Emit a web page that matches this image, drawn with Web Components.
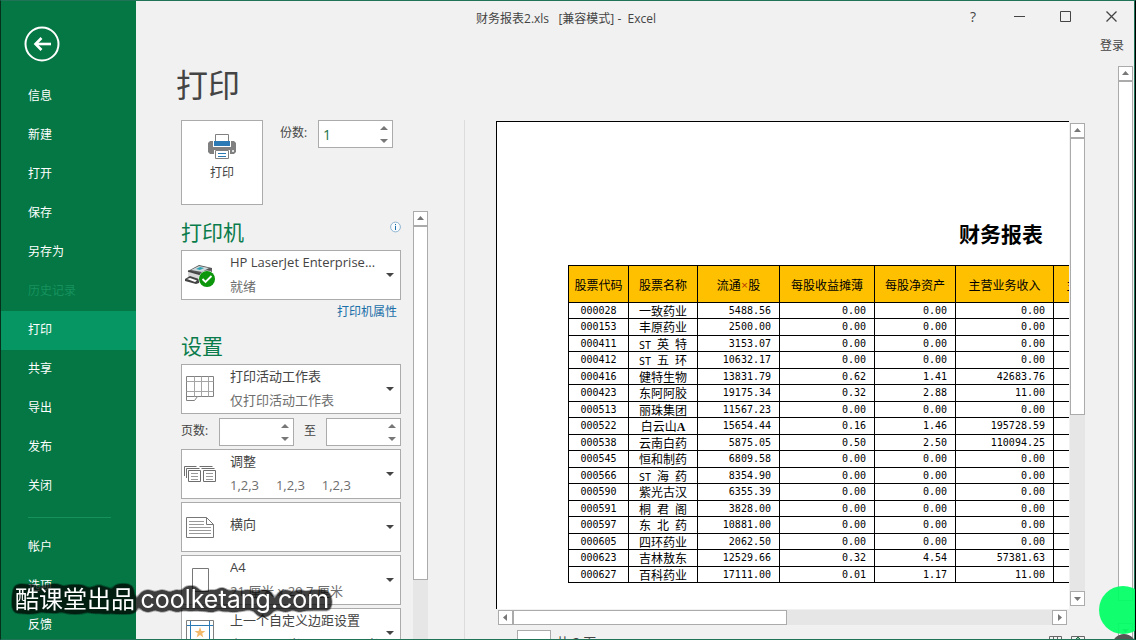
<!DOCTYPE html>
<html lang="zh-CN">
<head>
<meta charset="utf-8">
<title>财务报表2.xls [兼容模式] - Excel</title>
<style>
  body { margin: 0; overflow: hidden; font-family: "Open Sans", "Noto Sans CJK SC", sans-serif; font-size: 13px; color: #444; }
</style>
</head>
<body>
<backstage-app></backstage-app>

<script>
const BASE = `*, *::before, *::after { box-sizing: border-box; }
button, input, select { font: inherit; color: inherit; margin: 0; padding: 0; border: 0; background: none; border-radius: 0; }
h1, h2, h3, p, ul { margin: 0; padding: 0; font-weight: 400; }`;

function define(name, render, setup) {
  customElements.define(name, class extends HTMLElement {
    connectedCallback() {
      if (this.shadowRoot) return;
      const root = this.attachShadow({ mode: 'open' });
      const t = document.createElement('template');
      t.innerHTML = `<style>${BASE}</style>` + render(this);
      root.append(t.content.cloneNode(true));
      if (setup) setup(this, root);
    }
  });
}

/* Scroll rail: orientation from [horizontal], thumb and free track as flex ratios */
define('scroll-rail', el => {
  const h = el.hasAttribute('horizontal');
  const tri = h
    ? ['M9 4v7L5 7.5z', 'M6 4v7l4-3.5z']
    : ['M4 9h7L7.5 5z', 'M4 6h7L7.5 10z'];
  const btn = (d, label) => `<button type="button" aria-label="${label}"><svg width="13" height="13" viewBox="1 1 13 13"><path d="${d}" fill="#777"/></svg></button>`;
  return `<style>
    :host { display: flex; flex: none; flex-direction: ${h ? 'row' : 'column'}; background: #e6e6e6; ${h ? 'height' : 'width'}: 15px; }
    button { flex: none; display: grid; place-items: center; width: 15px; height: 15px; border: 1px solid #ababab; background: #fff; }
    .thumb { flex: ${el.getAttribute('thumb')} 1 0; background: #fff; border: 1px solid #ababab; }
    .track { flex: ${el.getAttribute('track')} 1 0; }
  </style>
  ${btn(tri[0], h ? '向左' : '向上')}<div class="thumb"></div><div class="track"></div>${el.hasAttribute('open-end') ? '' : btn(tri[1], h ? '向右' : '向下')}`;
});

define('spin-box', el => `<style>
    :host { display: block; width: 75px; height: 28px; }
    .box { display: flex; height: 100%; border: 1px solid #ababab; background: #fff; }
    input { flex: 1; min-width: 0; padding-left: 4px; color: #217346; font-size: 14px; outline: 0; appearance: textfield; }
    input::-webkit-inner-spin-button { appearance: none; }
    .steps { display: flex; flex-direction: column; width: 16px; }
    button { flex: 1; display: grid; place-items: center; }
  </style>
  <div class="box">
    <input type="number" value="${el.getAttribute('value') || ''}" aria-label="${el.getAttribute('label')}">
    <div class="steps">
      <button type="button" aria-label="增加"><svg width="8" height="4"><path d="M0 4h8L4 0z" fill="#777"/></svg></button>
      <button type="button" aria-label="减少"><svg width="8" height="4"><path d="M0 0h8L4 4z" fill="#777"/></svg></button>
    </div>
  </div>`, (el, root) => {
    const input = root.querySelector('input');
    const [up, down] = root.querySelectorAll('button');
    up.onclick = () => input.stepUp();
    down.onclick = () => input.stepDown();
  });

/* Drop-down with an icon slot and a second line of description */
define('option-picker', el => {
  const sub = el.getAttribute('sub');
  return `<style>
    :host { display: grid; grid-template-columns: minmax(0, 1fr); grid-template-rows: 48px; height: 50px; border: 1px solid #ababab; background: #fff; }
    select, .face { grid-area: 1 / 1; }
    select { appearance: none; width: 100%; height: 100%; padding: 0 20px ${sub ? 26 : 6}px 48px; outline: 0; text-overflow: ellipsis; }
    .face { display: grid; grid-template-columns: 36px minmax(0, 1fr) 20px; column-gap: 12px; pointer-events: none; align-items: center; }
    .icon { justify-self: center; display: flex; }
    p { align-self: end; white-space: pre; color: #6e6e6e; line-height: 20px; padding-bottom: 3px; }
    .arrow { justify-self: center; }
  </style>
  <select aria-label="${el.getAttribute('label')}"><option>${el.getAttribute('value')}</option></select>
  <div class="face">
    <span class="icon"><slot></slot></span>
    <p>${sub || ''}</p>
    <svg class="arrow" width="8" height="4"><path d="M0 0h8L4 4z" fill="#444"/></svg>
  </div>`;
});

define('back-nav', () => {
  const item = (t, cls = '') => `<li><a href="#" class="${cls}">${t}</a></li>`;
  return `<style>
    :host { display: block; background: #047744; color: #fff; font-size: 12px; padding-top: 25px; }
    .back { display: block; margin: 0 0 15px 23px; width: 36px; height: 36px; }
    .back svg { display: block; }
    ul { list-style: none; }
    a { display: block; padding-left: 27px; line-height: 37px; height: 39px; color: inherit; text-decoration: none; }
    .on { background: #069663; }
    .off { color: #17925e; }
    .rule { height: 1px; margin: 11px 25px 10px 27px; background: #17925e; }
  </style>
  <button class="back" type="button" aria-label="返回"><svg width="36" height="36" fill="none" stroke="#fff">
    <circle cx="18" cy="18" r="16.5" stroke-width="2"/><path d="M27 18H12" stroke-width="2.6"/><path d="M17.5 12L11.5 18l6 6" stroke-width="2.6"/></svg></button>
  <nav><ul>
    ${['信息', '新建', '打开', '保存', '另存为'].map(t => item(t)).join('')}
    ${item('历史记录', 'off')}${item('打印', 'on')}
    ${['共享', '导出', '发布', '关闭'].map(t => item(t)).join('')}
    <li class="rule"></li>
    ${['帐户', '选项', '反馈'].map(t => item(t)).join('')}
  </ul></nav>`;
});

define('title-bar', () => `<style>
    :host { display: block; font-size: 12px; }
    .bar { display: flex; height: 32px; align-items: flex-start; }
    h1 { flex: 1; font-size: 12px; line-height: 36px; text-align: center; padding-left: 46px; white-space: pre; }
    button { width: 46px; height: 30px; display: grid; place-items: center; font-size: 14px; }
    .sign { display: flex; justify-content: flex-end; height: 33px; padding-right: 10px; }
    a { color: inherit; text-decoration: none; line-height: 26px; }
  </style>
  <div class="bar">
    <h1>财务报表2.xls   [兼容模式] -  Excel</h1>
    <button type="button" aria-label="帮助">?</button>
    <button type="button" aria-label="最小化"><svg width="11" height="11"><path d="M0 5.500h11" stroke="#444"/></svg></button>
    <button type="button" aria-label="最大化"><svg width="11" height="11"><path d="M.5.5h10v10H.5z" fill="none" stroke="#444"/></svg></button>
    <button type="button" aria-label="关闭"><svg width="11" height="11"><path d="M.5.5l10 10M10.5.5l-10 10" stroke="#444" stroke-width="1.3"/></svg></button>
  </div>
  <div class="sign"><a href="#">登录</a></div>`);

define('print-pane', () => `<style>
    :host { display: flex; flex-direction: column; width: 247px; flex: none; min-height: 0; }
    .top { display: flex; height: 85px; flex: none; margin-bottom: 6px; }
    .print { width: 82px; height: 85px; background: #fff; border: 1px solid #ababab; display: flex; flex-direction: column; align-items: center; padding-top: 13px; font-size: 12px; line-height: 18px; }
    .print svg { margin-bottom: 4px; }
    .copies { font-size: 12px; line-height: 26px; padding-left: 17px; width: 55px; }
    .scroll { flex: 1; display: flex; gap: 12px; min-height: 0; }
    .list { width: 220px; height: 100%; display: flex; flex-direction: column; }
    .list > * { flex: none; }
    h2 { font-size: 21px; line-height: 30px; color: #0a7c4c; }
    .head { display: flex; justify-content: space-between; height: 39px; padding-top: 6px; }
    .head svg { margin: 4px 0 0; }
    .props { align-self: flex-end; color: #1a6fa8; text-decoration: none; font-size: 12px; line-height: 24px; padding-right: 4px; height: 24px; }
    .set { margin: 7px 0 3px; }
    .pages { display: flex; height: 28px; margin: 4px 0 3px; line-height: 26px; font-size: 12px; }
    .pages span:first-child { width: 38px; }
    .pages .to { width: 32px; text-align: center; }
    option-picker + option-picker { margin-top: 3px; }
    svg { display: block; }
  </style>
  <div class="top">
    <button class="print" type="button">
      <svg width="28" height="26">
        <path d="M2 7h24l2 2v9l-2 2H2l-2-2V9z" fill="#808080"/>
        <path d="M5 5h18v8H5z" fill="#fff"/>
        <path d="M7.5.5h13v7h-13z" fill="#fff" stroke="#808080"/>
        <path d="M6 7h16v5H6z" fill="#2b7ab5"/>
        <path d="M6 16h16v4H6z" fill="#fff"/><path d="M7.5 16.500h13v8h-13z" fill="#fff" stroke="#808080"/>
        <path d="M10 19.500h8M10 22.500h8" stroke="#2b7ab5"/><circle cx="25" cy="17" r="1" fill="#fff"/>
      </svg>打印</button>
    <span class="copies">份数:</span>
    <spin-box label="份数" value="1"></spin-box>
  </div>
  <div class="scroll">
    <div class="list">
      <div class="head"><h2>打印机</h2>
        <svg width="11" height="22" viewBox="0 0 11 22"><circle cx="5.5" cy="6" r="4.900" fill="#f8fbfd" stroke="#8fb4cf"/><path d="M5.5 5v4M5.500 3v1.200" stroke="#1a6fa8"/></svg></div>
      <option-picker label="打印机" value="HP LaserJet Enterprise..." sub="就绪">
        <svg width="32" height="28" viewBox="0 0 32 28">
          <path d="M4 10l11-6 13 3v4l-9 4z" fill="#555"/><path d="M7 9l8-4 10 2-7 4z" fill="#cfd8da"/><path d="M12 8l4-2 4 1-4 2z" fill="#2aa5b5"/>
          <path d="M4 10l14 4v8L4 17z" fill="#d8d8d8"/><path d="M18 14l10-6v9l-10 5z" fill="#666"/><path d="M4 10l14 4" stroke="#444" stroke-width="1.500"/>
          <path d="M1 18l5-3 9 3v4l-3 1-11-3z" fill="#444"/><path d="M3 18l3-1 7 2.500-2 1.500z" fill="#fff"/>
          <circle cx="23" cy="18" r="8.500" fill="#fff"/><circle cx="23" cy="18" r="8" fill="#0b960b"/><path d="M18.500 18l3 3 6-6" fill="none" stroke="#fff" stroke-width="1.800"/>
        </svg></option-picker>
      <a class="props" href="#">打印机属性</a>
      <h2 class="set">设置</h2>
      <option-picker label="打印内容" value="打印活动工作表" sub="仅打印活动工作表">
        <svg width="28" height="26" fill="none" stroke="#808080">
          <path d="M.5.500h27v20H11.500l-3 4h-8z"/><path d="M.5 20.500h11" /><path d="M8.500.5v20M15.500.5v20M22.500.5v20M.5 5.500h27M.5 15.500h27" stroke="#a5a5a5"/></svg></option-picker>
      <div class="pages"><span>页数:</span><spin-box label="起始页"></spin-box><span class="to">至</span><spin-box label="结束页"></spin-box></div>
      <option-picker label="调整" value="调整" sub="1,2,3     1,2,3     1,2,3">
        <svg width="32" height="16" fill="none" stroke="#6e6e6e">
          <path d="M.5 10V.5h12M2.500 12V2.500h13M15.500.5h13M17.500 2.500h13"/><path d="M4.500 4.500h12v11h-12zM19.500 4.500h12v11h-12z" fill="#fff"/>
          <path d="M7 7.500h7M7 10.500h7M7 13.500h7M22 7.500h7M22 10.500h7M22 13.500h7" stroke="#999"/></svg></option-picker>
      <option-picker label="方向" value="横向">
        <svg width="28" height="21" fill="none" stroke="#777">
          <path d="M.5.500h20l7 7v13H.5zM20.500.5v7h7"/><path d="M3 4.500h15M3 7.500h15M3 10.500h22M3 13.500h22M3 16.500h22" stroke="#999"/></svg></option-picker>
      <option-picker label="纸张大小" value="A4" sub="21 厘米 x 29.7 厘米">
        <svg width="17" height="24" fill="none" stroke="#777"><path d="M.5.500h16v23H.5z"/></svg></option-picker>
      <option-picker label="页边距" value="上一个自定义边距设置" sub="上:  1.9 厘米  下:  1.9 厘米">
        <svg width="28" height="26" fill="none"><path d="M.5.500h27v25H.5z" stroke="#808080"/><path d="M4.500 1v24M23.500 1v24M1 5.500h26M1 20.500h26" stroke="#2b7ab5"/>
          <path d="M14 7l1.400 4h4l-3.200 2.500 1.200 4-3.400-2.400-3.400 2.400 1.200-4L8.600 11h4z" fill="#f3b96b"/></svg></option-picker>
    </div>
    <scroll-rail thumb="354" track="59" open-end></scroll-rail>
  </div>`);

const HEADS = ['股票代码', '股票名称', '流通<i>×</i>股', '每股收益摊薄', '每股净资产', '主营业务收入', '主营业务利润'];
const ROWS = [
  ['000028', '一致药业', '5488.56', '0.00', '0.00', '0.00'],
  ['000153', '丰原药业', '2500.00', '0.00', '0.00', '0.00'],
  ['000411', '<b>ST </b>英<b> </b>特', '3153.07', '0.00', '0.00', '0.00'],
  ['000412', '<b>ST </b>五<b> </b>环', '10632.17', '0.00', '0.00', '0.00'],
  ['000416', '健特生物', '13831.79', '0.62', '1.41', '42683.76'],
  ['000423', '东阿阿胶', '19175.34', '0.32', '2.88', '11.00'],
  ['000513', '丽珠集团', '11567.23', '0.00', '0.00', '0.00'],
  ['000522', '白云山<strong>A</strong>', '15654.44', '0.16', '1.46', '195728.59'],
  ['000538', '云南白药', '5875.05', '0.50', '2.50', '110094.25'],
  ['000545', '恒和制药', '6809.58', '0.00', '0.00', '0.00'],
  ['000566', '<b>ST </b>海<b> </b>药', '8354.90', '0.00', '0.00', '0.00'],
  ['000590', '紫光古汉', '6355.39', '0.00', '0.00', '0.00'],
  ['000591', '桐<b> </b>君<b> </b>阁', '3828.00', '0.00', '0.00', '0.00'],
  ['000597', '东<b> </b>北<b> </b>药', '10881.00', '0.00', '0.00', '0.00'],
  ['000605', '四环药业', '2062.50', '0.00', '0.00', '0.00'],
  ['000623', '吉林敖东', '12529.66', '0.32', '4.54', '57381.63'],
  ['000627', '百科药业', '17111.00', '0.01', '1.17', '11.00']
];
const COLS = [60, 69, 82, 95, 81, 98, 98];

define('sheet-preview', () => `<style>
    :host { display: flex; flex-direction: column; flex: 1; min-width: 0; min-height: 0; padding-top: 1px; }
    .view { flex: 1; display: flex; min-height: 0; }
    .sheet { flex: 1; min-width: 0; overflow: hidden; background: #fff; color: #000; border: solid #000; border-width: 1px 0 0 1px; padding: 96px 0 0 71px; }
    scroll-rail:not([horizontal]) { margin: 2px 0 3px 1px; }
    scroll-rail[horizontal] { margin: 1px 18px 5px 2px; }
    .page { width: 866px; }
    h2 { font: 700 21px/30px "Noto Sans CJK SC", sans-serif; text-align: center; margin-bottom: 17px; }
    table { table-layout: fixed; width: ${COLS.reduce((a, b) => a + b) + 1}px; border-collapse: separate; border-spacing: 0; border: solid #000; border-width: 1px 0 0 1px; font: 10px/14px "DejaVu Sans Mono", monospace; }
    th, td { border: solid #000; border-width: 0 1px 1px 0; padding: 0; white-space: nowrap; overflow: hidden; }
    th, td:nth-child(2) { font: 12px/14px "Noto Sans CJK SC", sans-serif; }
    th { background: #ffc000; height: 37px; padding-top: 2px; }
    td { text-align: right; padding-right: 8px; height: 16px; }
    tr:nth-child(even) td { height: 17px; }
    td:nth-child(-n+2) { text-align: center; padding: 0; }
    b { font: 10px/8px "DejaVu Sans Mono", monospace; white-space: pre; }
    strong { font: 700 12px/8px "Liberation Serif", serif; }
    i { font: 9px/8px "DejaVu Sans", sans-serif; color: #b03000; vertical-align: 2px; }
    .foot { flex: none; height: 9px; display: flex; align-items: flex-start; padding-left: 21px; font-size: 13px; }
    .foot input { width: 34px; height: 28px; border: 1px solid #ababab; background: #fff; }
    .foot span { padding-left: 5px; line-height: 24px; white-space: pre; flex: 1; }
    .foot button { width: 14px; height: 14px; margin: 6px 0 0 8px; }
    .foot svg { display: block; }
  </style>
  <div class="view">
    <div class="sheet"><div class="page">
      <h2>财务报表</h2>
      <table>
        <colgroup>${COLS.map(w => `<col style="width:${w}px">`).join('')}</colgroup>
        <thead><tr>${HEADS.map(h => `<th>${h}</th>`).join('')}</tr></thead>
        <tbody>${ROWS.map(r => `<tr>${r.map(c => `<td>${c}</td>`).join('')}<td></td></tr>`).join('')}</tbody>
      </table>
    </div></div>
    <scroll-rail thumb="277" track="178"></scroll-rail>
  </div>
  <scroll-rail horizontal thumb="274" track="266"></scroll-rail>
  <div class="foot">
    <input type="text" aria-label="当前页"><span>共 2 页</span>
    <button type="button" aria-label="显示边距"><svg width="14" height="14" fill="none" stroke="#666"><path d="M.5.500h12v12H.5zM4.500.5v12M8.500.5v12"/></svg></button>
    <button type="button" aria-label="缩放到页面"><svg width="14" height="14" fill="none" stroke="#666"><path d="M.5.500h13v12H.5z"/><path d="M7 1v5M5 3l2-2 2 2" stroke="#217346"/></svg></button>
  </div>`);

define('video-mark', () => `<style>
    :host { position: absolute; left: 14px; bottom: 23px; pointer-events: none; color: #fff; font: 24px/36px "Noto Sans CJK SC", sans-serif; white-space: nowrap; }
    p { filter: url(#halo); }
    span { font: 25px/30px Inter, sans-serif; }
    svg { position: absolute; width: 0; height: 0; }
  </style>
  <svg aria-hidden="true"><filter id="halo" x="-5%" y="-50%" width="110%" height="200%" color-interpolation-filters="sRGB">
    <feGaussianBlur in="SourceAlpha" stdDeviation="3"/>
    <feComponentTransfer result="g"><feFuncA type="linear" slope="20" intercept="-0.6"/></feComponentTransfer>
    <feComponentTransfer in="g" result="h"><feFuncA type="linear" slope="0.75"/></feComponentTransfer>
    <feMerge><feMergeNode in="h"/><feMergeNode in="SourceGraphic"/></feMerge>
  </filter></svg>
  <p>酷课堂出品 <span>coolketang.com</span></p>`);

define('backstage-app', () => `<style>
    :host { display: grid; grid-template-columns: 135px 1fr; grid-template-rows: minmax(0, 1fr); position: relative; height: 100vh; overflow: hidden; background: #f1f1f1; border: 1px solid; border-color: #217357 #000 #217357 #06301c; box-sizing: border-box; }
    back-nav { min-height: 0; overflow: hidden; }
    main { display: flex; flex-direction: column; min-width: 0; min-height: 0; overflow: hidden; border-right: 1px solid #217357; }
    .body { flex: 1; display: flex; min-height: 0; }
    .content { flex: 1; min-width: 0; display: flex; flex-direction: column; padding-left: 45px; }
    h2 { font-size: 32px; line-height: 38px; height: 40px; margin: 0 0 14px -5px; }
    .cols { flex: 1; display: flex; min-height: 0; }
    .line { width: 1px; background: #dcdcdc; margin: 0 31px 0 36px; }
    .outer { margin: 0 1px 1px 33px; }
    .dot { position: absolute; right: -12px; bottom: 5px; width: 48px; height: 48px; border-radius: 50%; background: rgba(0, 255, 100, .93); }
    .knob { position: absolute; right: -1px; bottom: -19px; width: 24px; height: 24px; border-radius: 50%; background: #555; }
  </style>
  <back-nav></back-nav>
  <main>
    <title-bar></title-bar>
    <div class="body">
      <div class="content">
        <h2>打印</h2>
        <div class="cols"><print-pane></print-pane><div class="line"></div><sheet-preview></sheet-preview></div>
      </div>
      <scroll-rail class="outer" thumb="519" track="22"></scroll-rail>
    </div>
  </main>
  <div class="dot"></div><div class="knob"></div>
  <video-mark></video-mark>`);
</script>
</body>
</html>
